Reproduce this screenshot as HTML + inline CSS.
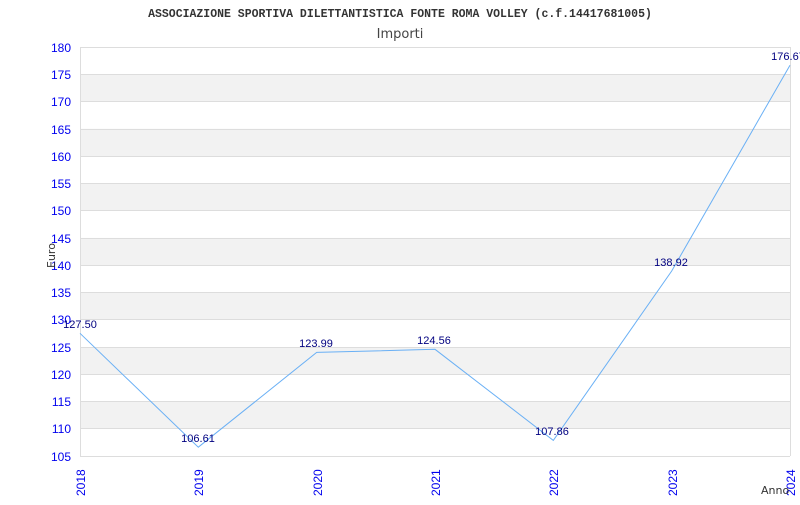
<!DOCTYPE html>
<html><head><style>body{margin:0;background:#fff}</style></head><body>
<svg width="800" height="500" xmlns="http://www.w3.org/2000/svg" font-family="Liberation Sans, sans-serif">
<rect width="800" height="500" fill="#fff"/>
<text x="400" y="17" text-anchor="middle" font-family="Liberation Mono, monospace" font-weight="bold" font-size="11.5" fill="#333">ASSOCIAZIONE SPORTIVA DILETTANTISTICA FONTE ROMA VOLLEY (c.f.14417681005)</text>
<text x="400" y="38" text-anchor="middle" font-family="DejaVu Sans, sans-serif" font-size="13" fill="#444">Importi</text>
<g fill="#f2f2f2">
<rect x="80" y="74.3" width="710" height="27.3"/>
<rect x="80" y="128.8" width="710" height="27.3"/>
<rect x="80" y="183.4" width="710" height="27.3"/>
<rect x="80" y="237.9" width="710" height="27.3"/>
<rect x="80" y="292.4" width="710" height="27.3"/>
<rect x="80" y="347" width="710" height="27.3"/>
<rect x="80" y="401.5" width="710" height="27.3"/>
</g>
<g stroke="#ddd" stroke-width="1">
<line x1="80" x2="790" y1="47.5" y2="47.5"/><line x1="80" x2="790" y1="74.5" y2="74.5"/><line x1="80" x2="790" y1="101.5" y2="101.5"/><line x1="80" x2="790" y1="129.5" y2="129.5"/><line x1="80" x2="790" y1="156.5" y2="156.5"/><line x1="80" x2="790" y1="183.5" y2="183.5"/><line x1="80" x2="790" y1="210.5" y2="210.5"/><line x1="80" x2="790" y1="238.5" y2="238.5"/><line x1="80" x2="790" y1="265.5" y2="265.5"/><line x1="80" x2="790" y1="292.5" y2="292.5"/><line x1="80" x2="790" y1="319.5" y2="319.5"/><line x1="80" x2="790" y1="347.5" y2="347.5"/><line x1="80" x2="790" y1="374.5" y2="374.5"/><line x1="80" x2="790" y1="401.5" y2="401.5"/><line x1="80" x2="790" y1="428.5" y2="428.5"/><line x1="80" x2="790" y1="456.5" y2="456.5"/>
<line x1="80.5" x2="80.5" y1="47" y2="456"/><line x1="790.5" x2="790.5" y1="47" y2="456"/>
</g>
<g fill="#0000ee" font-size="12" text-anchor="end">
<text x="71" y="52">180</text><text x="71" y="79">175</text><text x="71" y="106">170</text><text x="71" y="134">165</text><text x="71" y="161">160</text><text x="71" y="188">155</text><text x="71" y="215">150</text><text x="71" y="243">145</text><text x="71" y="270">140</text><text x="71" y="297">135</text><text x="71" y="324">130</text><text x="71" y="352">125</text><text x="71" y="379">120</text><text x="71" y="406">115</text><text x="71" y="433">110</text><text x="71" y="461">105</text>
</g>
<g fill="#0000ee" font-size="12">
<text transform="translate(85,496) rotate(-90)">2018</text>
<text transform="translate(203,496) rotate(-90)">2019</text>
<text transform="translate(322,496) rotate(-90)">2020</text>
<text transform="translate(440,496) rotate(-90)">2021</text>
<text transform="translate(558,496) rotate(-90)">2022</text>
<text transform="translate(677,496) rotate(-90)">2023</text>
<text transform="translate(795,496) rotate(-90)">2024</text>
</g>
<text transform="translate(55,268) rotate(-90)" font-family="DejaVu Sans, sans-serif" font-size="11" fill="#333">Euro</text>
<text x="761" y="494" font-family="DejaVu Sans, sans-serif" font-size="11" fill="#333">Anno</text>
<polyline fill="none" stroke="#6ab0f5" stroke-width="1" points="80,333.3 198.3,447.2 316.7,352.4 435,349.3 553.3,440.4 671.7,271 790,65.2"/>
<g fill="#000080" font-size="11" text-anchor="middle">
<text x="80" y="328">127.50</text><text x="198" y="442">106.61</text><text x="316" y="347">123.99</text><text x="434" y="344">124.56</text><text x="552" y="435">107.86</text><text x="671" y="266">138.92</text><text x="788" y="60">176.67</text>
</g>
</svg>
</body></html>
